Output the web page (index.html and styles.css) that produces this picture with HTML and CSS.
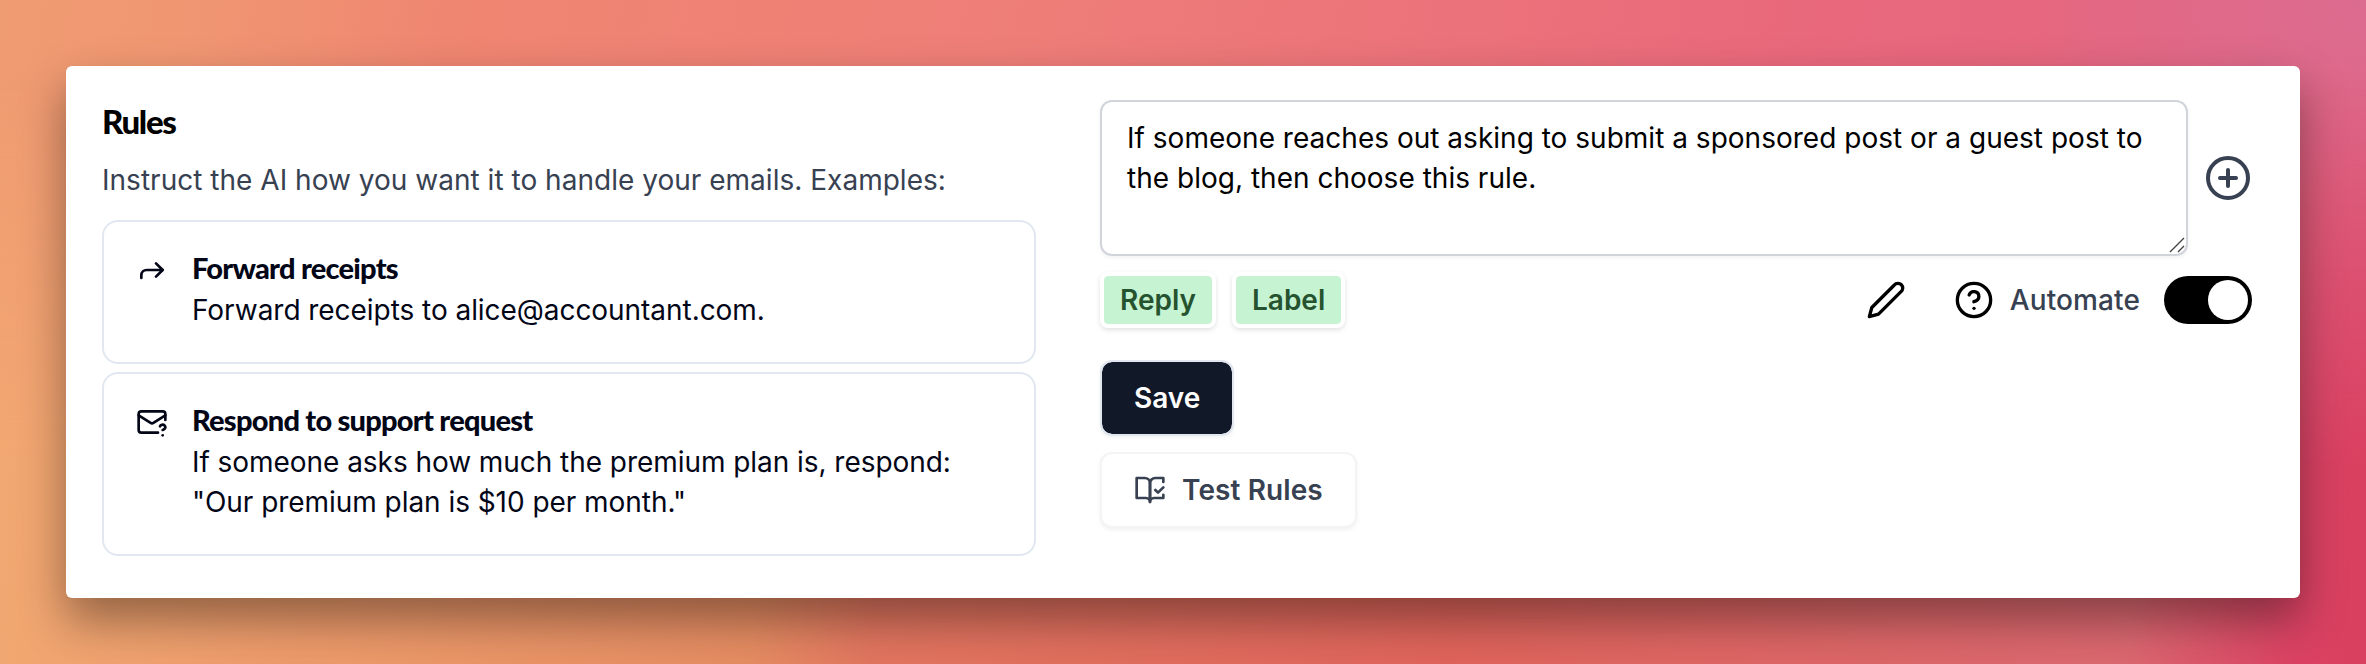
FILE: index.html
```html
<!DOCTYPE html>
<html lang="en">
<head>
<meta charset="utf-8">
<title>Rules</title>
<link rel="stylesheet" href="styles.css">
</head>
<body>
<main class="panel">
  <section class="intro">
    <h1 class="heading">Rules</h1>
    <p class="lead">Instruct the AI how you want it to handle your emails. Examples:</p>
    <div class="examples">
      <article class="example">
        <svg class="icon icon-sm" viewBox="0 0 24 24"><path d="m15 17 5-5-5-5"/><path d="M4 18v-2a4 4 0 0 1 4-4h12"/></svg>
        <div>
          <h2 class="example-title">Forward receipts</h2>
          <p class="example-text">Forward receipts to alice@accountant.com.</p>
        </div>
      </article>
      <article class="example">
        <svg class="icon icon-sm" viewBox="0 0 24 24"><path d="M22 10.5V6a2 2 0 0 0-2-2H4a2 2 0 0 0-2 2v12c0 1.1.9 2 2 2h12.5"/><path d="m22 7-8.97 5.7a1.94 1.94 0 0 1-2.06 0L2 7"/><path d="M18 15.28c.2-.4.5-.8.9-1a2.1 2.1 0 0 1 2.6.4c.3.4.5.8.5 1.3 0 1.3-2 2-2 2"/><path d="M20 22v.01"/></svg>
        <div>
          <h2 class="example-title">Respond to support request</h2>
          <p class="example-text">If someone asks how much the premium plan is, respond:<br>"Our premium plan is $10 per month."</p>
        </div>
      </article>
    </div>
  </section>
  <section class="editor">
    <div class="prompt-row">
      <div class="prompt">
        <textarea class="prompt-input">If someone reaches out asking to submit a sponsored post or a guest post to the blog, then choose this rule.</textarea>
        <svg class="grip" viewBox="0 0 16 16"><path d="M1 15 15 1M9 15l6-6"/></svg>
      </div>
      <svg class="icon icon-lg muted" viewBox="0 0 24 24"><circle cx="12" cy="12" r="10"/><path d="M8 12h8M12 8v8"/></svg>
    </div>
    <div class="action-row">
      <span class="badge">Reply</span>
      <span class="badge">Label</span>
      <div class="controls">
        <svg class="icon icon-md pencil" viewBox="0 0 24 24"><path d="M17 3a2.85 2.83 0 1 1 4 4L7.5 20.5 2 22l1.5-5.5Z"/></svg>
        <svg class="icon icon-md" viewBox="0 0 24 24"><circle cx="12" cy="12" r="10"/><path d="M9.09 9a3 3 0 0 1 5.83 1c0 2-3 3-3 3"/><path d="M12 17h.01"/></svg>
        <span class="switch-label">Automate</span>
        <span class="switch"><span class="knob"></span></span>
      </div>
    </div>
    <div class="buttons">
      <button class="button primary">Save</button>
      <button class="button outline"><svg class="icon icon-sm" viewBox="0 0 24 24"><path d="M8 3H2v15h7c1.7 0 3 1.3 3 3V7c0-2.2-1.8-4-4-4Z"/><path d="m16 12 2 2 4-4"/><path d="M22 6V3h-6c-2.2 0-4 1.8-4 4v14c0-1.7 1.3-3 3-3h7v-2.3"/></svg>Test Rules</button>
    </div>
  </section>
</main>
</body>
</html>
```

FILE: styles.css
```css
* { box-sizing: border-box; }

body {
  position: relative;
  margin: 0;
  width: 2366px;
  height: 664px;
  overflow: hidden;
  padding: 66px;
  font: 400 28px/40px Inter, sans-serif;
  color: #020617;
  background:
    radial-gradient(ellipse 340px 280px at 2366px 0, #dc6c90 0%, #dc6c9000 100%),
    linear-gradient(100deg, #f09c72 0%, #f09672 8%, #ef8671 18%, #ee7d78 42%, #e9687c 74%, #e36680 90%, #dd6080 100%);
}

/* Lower half of the backdrop, faded into the upper half */
body::before {
  content: "";
  position: absolute;
  inset: 0;
  background: linear-gradient(94deg, #f2a972 0%, #ee9d6c 12%, #e58c62 33%, #e1755f 38%, #df645b 62%, #db6870 90%, #da4263 97%, #d93f5f 100%);
  mask-image: linear-gradient(to bottom, transparent 10%, #000 70%);
}

h1, h2, p { margin: 0; }

.panel {
  position: relative;
  display: flex;
  gap: 64px;
  width: 2234px;
  height: 532px;
  padding: 34px 48px 42px 36px;
  border-radius: 6px;
  background: #fff;
  box-shadow: 0 22px 46px rgba(0, 0, 0, 0.39);
}

.intro { width: 934px; }
.heading {
  font: 900 33px/43px Lato, sans-serif;
  letter-spacing: -1.3px;
  color: #000;
}
.lead { margin-top: 17px; color: #374151; letter-spacing: 0.02px; }
.examples { display: grid; gap: 8px; margin-top: 20px; }
.example {
  display: flex;
  gap: 24px;
  padding: 32px;
  border: 2px solid #e2e8f0;
  border-radius: 16px;
}
.example-title {
  margin-bottom: 8px;
  font: 900 29px/28px Lato, sans-serif;
  letter-spacing: -0.76px;
}
.example-text { letter-spacing: -0.05px; }

.icon {
  flex: none;
  display: block;
  fill: none;
  stroke: currentColor;
  stroke-width: 2;
  stroke-linecap: round;
  stroke-linejoin: round;
}
.icon-sm { width: 32px; height: 32px; }
.icon-md { width: 40px; height: 40px; }
.icon-lg { width: 48px; height: 48px; }
.muted { color: #374151; }

.editor { flex: 1; }
.prompt-row { display: flex; align-items: center; gap: 16px; }
.prompt { position: relative; flex: 1; height: 156px; }
.prompt-input {
  display: block;
  width: 100%;
  height: 156px;
  padding: 16px 24px 16px 25px;
  border: 2px solid #d1d5db;
  border-radius: 12px;
  font: inherit;
  letter-spacing: 0.015px;
  color: #000;
  resize: none;
  overflow: hidden;
  background: #fff;
  box-shadow: 0 2px 4px rgba(0, 0, 0, 0.05);
}
.grip {
  position: absolute;
  right: 3px;
  bottom: 3px;
  width: 16px;
  height: 16px;
  fill: none;
  stroke: #444;
  stroke-width: 1.4;
}

.action-row { display: flex; align-items: center; gap: 16px; margin-top: 16px; }
.badge {
  height: 56px;
  padding: 4px 16px;
  border: 4px solid #fff;
  border-radius: 8px;
  background: #c6f4d3 padding-box;
  color: #26532f;
  font-weight: 600;
  box-shadow: 0 2px 5px rgba(0, 0, 0, 0.12);
}
.controls { display: flex; align-items: center; margin-left: auto; }
.pencil { margin-right: 48px; }
.controls .icon { color: #000; }
.switch-label { margin: 0 24px 0 16px; font-weight: 500; letter-spacing: 0.12px; color: #374151; }
.switch { display: flex; justify-content: flex-end; width: 88px; height: 48px; padding: 4px; border-radius: 24px; background: #000; }
.knob { width: 40px; height: 40px; border-radius: 50%; background: #fff; }

.buttons { display: flex; flex-direction: column; align-items: flex-start; gap: 16px; margin-top: 32px; }
.button {
  display: flex;
  align-items: center;
  gap: 16px;
  height: 76px;
  padding: 0 32px;
  border: 2px solid;
  border-radius: 12px;
  font: 600 28px/40px Inter, sans-serif;
}
.primary { color: #fff; background: #111827 padding-box; border-color: #e2e6ee; box-shadow: 0 2px 4px rgba(0, 0, 0, 0.05); }
.outline { letter-spacing: 0.1px; color: #374151; background: #fff; border-color: #f3f4f6; box-shadow: 0 2px 4px rgba(0, 0, 0, 0.06); }
```
